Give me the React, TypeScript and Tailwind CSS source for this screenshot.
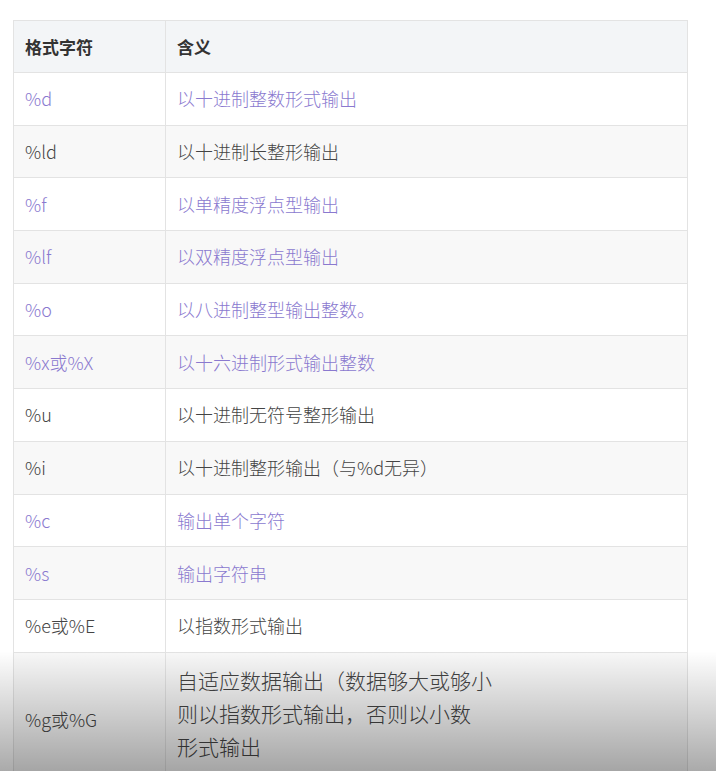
export default function App() {
  const rows: [string, string, boolean][] = [
    ["%d", "以十进制整数形式输出", true],
    ["%ld", "以十进制长整形输出", false],
    ["%f", "以单精度浮点型输出", true],
    ["%lf", "以双精度浮点型输出", true],
    ["%o", "以八进制整型输出整数。", true],
    ["%x或%X", "以十六进制形式输出整数", true],
    ["%u", "以十进制无符号整形输出", false],
    ["%i", "以十进制整形输出（与%d无异）", false],
    ["%c", "输出单个字符", true],
    ["%s", "输出字符串", true],
    ["%e或%E", "以指数形式输出", false],
  ];
  return (
    <div className="relative w-[716px] h-[771px] overflow-hidden bg-white" style={{ fontFamily: '"Microsoft YaHei", "Noto Sans CJK SC", sans-serif' }}>
      <div className="pt-[20px] pl-[13px]">
        <table className="w-[675px] border-collapse text-[18px] text-[#444]">
          <colgroup><col className="w-[152px]" /><col /></colgroup>
          <thead>
            <tr className="h-[52px] bg-[#f3f5f7] font-bold">
              <th className="border border-[#e3e3e3] text-left px-[11px] text-[17px] font-bold text-[#333]">格式字符</th>
              <th className="border border-[#e3e3e3] text-left px-[11px] text-[17px] font-bold text-[#333]">含义</th>
            </tr>
          </thead>
          <tbody>
            {rows.map(([a, b, p], i) => (
              <tr key={i} className={`h-[52.7px] ${i % 2 === 1 ? "bg-[#f8f8f8]" : "bg-white"} ${p ? "text-[#8a79cf]" : ""}`}>
                <td className="border border-[#e3e3e3] px-[11px] font-light">{a}</td>
                <td className="border border-[#e3e3e3] px-[11px] font-light">{b}</td>
              </tr>
            ))}
            <tr className="bg-[#f8f8f8]">
              <td className="border border-[#e3e3e3] px-[11px] pt-[4px] font-light">%g或%G</td>
              <td className="border border-[#e3e3e3] px-[11px] pt-[11px] pb-[20px] leading-[33px] text-[21px] font-light">
                自适应数据输出（数据够大或够小<br />则以指数形式输出，否则以小数<br />形式输出
              </td>
            </tr>
          </tbody>
        </table>
      </div>
      <div className="absolute left-0 right-0 bottom-0 h-[120px] bg-gradient-to-b from-transparent to-[#00000055]" />
    </div>
  );
}
